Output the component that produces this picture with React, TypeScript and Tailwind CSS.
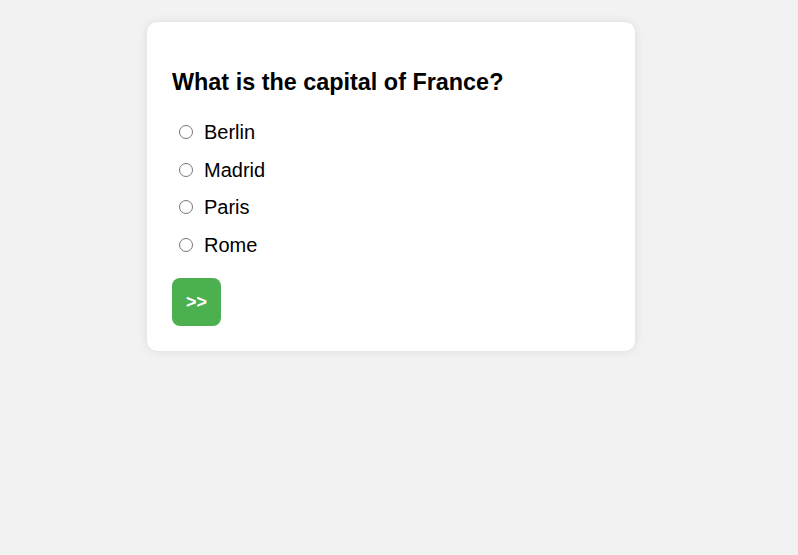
import { useState } from 'react'

const options = ['Berlin', 'Madrid', 'Paris', 'Rome']

export default function App() {
  const [picked, setPicked] = useState<string | null>(null)

  return (
    <div className="min-h-screen bg-[#f2f2f2] pr-4 pt-[22px] font-['Liberation_Sans',Arial,sans-serif] text-black">
      <div className="mx-auto w-[488px] rounded-[10px] bg-white px-[25px] pb-[25px] pt-[46px] shadow-[0_0_10px_rgba(0,0,0,0.1)]">
        <h2 className="mb-[17px] text-[23.4px] font-bold leading-[28px]">What is the capital of France?</h2>
        <div className="flex flex-col">
          {options.map((o) => (
            <label key={o} className="flex h-[37.7px] items-center gap-[11px] pl-[7px] text-[20px]">
              <input
                type="radio"
                name="answer"
                checked={picked === o}
                onChange={() => setPicked(o)}
                className="m-0 h-[14px] w-[14px] accent-[#767676]"
              />
              {o}
            </label>
          ))}
        </div>
        <button className="mt-[14px] h-12 w-[49px] rounded-lg bg-[#4caf50] text-lg font-bold text-white">
          &gt;&gt;
        </button>
      </div>
    </div>
  )
}
